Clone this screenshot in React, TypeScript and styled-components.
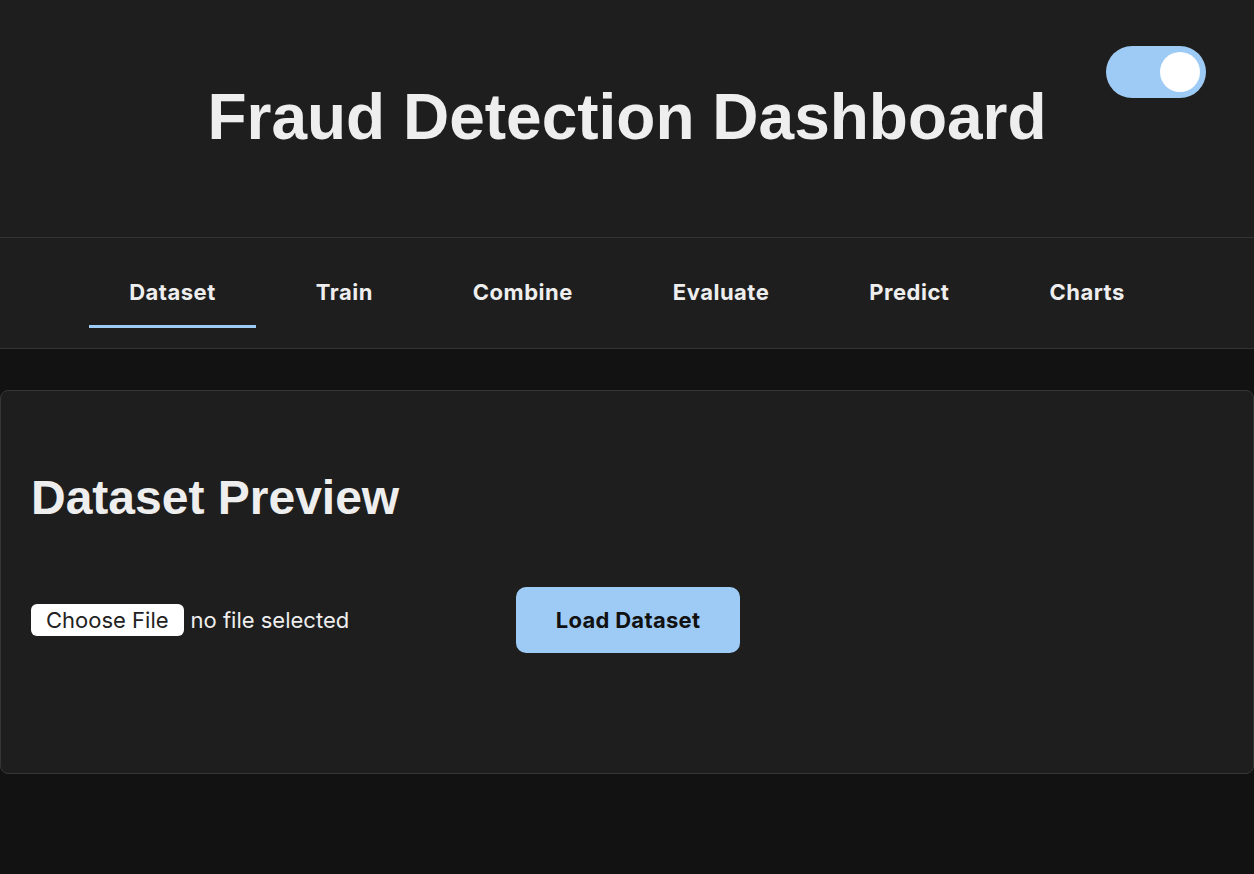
import { useState } from "react";
import styled, { createGlobalStyle } from "styled-components";

const GlobalStyle = createGlobalStyle`
  html, body {
    margin: 0;
    padding: 0;
    background-color: #121212;
    color: #eeeeee;
    font-family: "Liberation Sans", Arial, sans-serif;
  }
`;

const Page = styled.div`
  min-height: 874px;
  background-color: #121212;
`;

const Header = styled.header`
  position: relative;
  height: 237px;
  display: flex;
  align-items: center;
  justify-content: center;
  background-color: #1e1e1e;
  border-bottom: 1px solid #333333;
`;

const Title = styled.h1`
  margin: 0 0 4px;
  font-size: 64px;
  font-weight: 700;
  color: #eeeeee;
`;

const Toggle = styled.button<{ $on: boolean }>`
  position: absolute;
  top: 46px;
  right: 48px;
  width: 100px;
  height: 52px;
  padding: 0;
  border: none;
  border-radius: 26px;
  background-color: ${(p) => (p.$on ? "#9ecbf5" : "#555555")};
  cursor: pointer;

  &::after {
    content: "";
    position: absolute;
    top: 6px;
    left: ${(p) => (p.$on ? "54px" : "6px")};
    width: 40px;
    height: 40px;
    border-radius: 50%;
    background-color: #ffffff;
  }
`;

const Tabs = styled.nav`
  height: 111px;
  display: flex;
  justify-content: center;
  align-items: flex-end;
  gap: 20px;
  background-color: #1e1e1e;
  border-bottom: 1px solid #333333;
  box-sizing: border-box;
  padding-bottom: 20px;
`;

const Tab = styled.button<{ $active: boolean }>`
  padding: 20px 40px 21px;
  border: none;
  border-bottom: 3px solid ${(p) => (p.$active ? "#9ecbf5" : "transparent")};
  background: none;
  color: #eeeeee;
  font-family: Inter, "Noto Sans", sans-serif;
  font-size: 22px;
  font-weight: 700;
  letter-spacing: 0.5px;
  line-height: 24px;
  cursor: pointer;
`;

const Main = styled.main`
  padding-top: 41px;
`;

const Card = styled.section`
  height: 384px;
  box-sizing: border-box;
  padding: 78px 30px 0;
  background-color: #1e1e1e;
  border: 1px solid #363636;
  border-radius: 8px;
`;

const CardTitle = styled.h2`
  margin: 0 0 60px;
  font-size: 48px;
  font-weight: 700;
  line-height: 58px;
  color: #eeeeee;
`;

const Row = styled.div`
  display: flex;
  align-items: center;
`;

const FilePicker = styled.label`
  width: 485px;
  display: flex;
  align-items: center;
  gap: 7px;
  font-family: Inter, "Noto Sans", sans-serif;
  font-size: 22px;
  color: #eeeeee;
  cursor: pointer;

  input {
    display: none;
  }
`;

const ChooseButton = styled.span`
  display: inline-flex;
  align-items: center;
  height: 32px;
  padding: 0 15px;
  background-color: #ffffff;
  color: #222222;
  border-radius: 6px;
`;

const LoadButton = styled.button`
  width: 224px;
  height: 66px;
  border: none;
  border-radius: 10px;
  background-color: #9ecbf5;
  color: #111111;
  font-family: Inter, "Noto Sans", sans-serif;
  font-size: 22px;
  font-weight: 700;
  letter-spacing: 0.3px;
  cursor: pointer;
`;

const tabs = ["Dataset", "Train", "Combine", "Evaluate", "Predict", "Charts"];

export default function App() {
  const [dark, setDark] = useState(true);
  const [active, setActive] = useState("Dataset");
  const [fileName, setFileName] = useState("");

  return (
    <Page>
      <GlobalStyle />
      <Header>
        <Title>Fraud Detection Dashboard</Title>
        <Toggle $on={dark} onClick={() => setDark(!dark)} aria-label="Toggle theme" />
      </Header>

      <Tabs>
        {tabs.map((t) => (
          <Tab key={t} $active={active === t} onClick={() => setActive(t)}>
            {t}
          </Tab>
        ))}
      </Tabs>

      <Main>
        <Card>
          <CardTitle>Dataset Preview</CardTitle>
          <Row>
            <FilePicker>
              <input
                type="file"
                onChange={(e) => setFileName(e.target.files?.[0]?.name ?? "")}
              />
              <ChooseButton>Choose File</ChooseButton>
              {fileName || "no file selected"}
            </FilePicker>
            <LoadButton>Load Dataset</LoadButton>
          </Row>
        </Card>
      </Main>
    </Page>
  );
}
